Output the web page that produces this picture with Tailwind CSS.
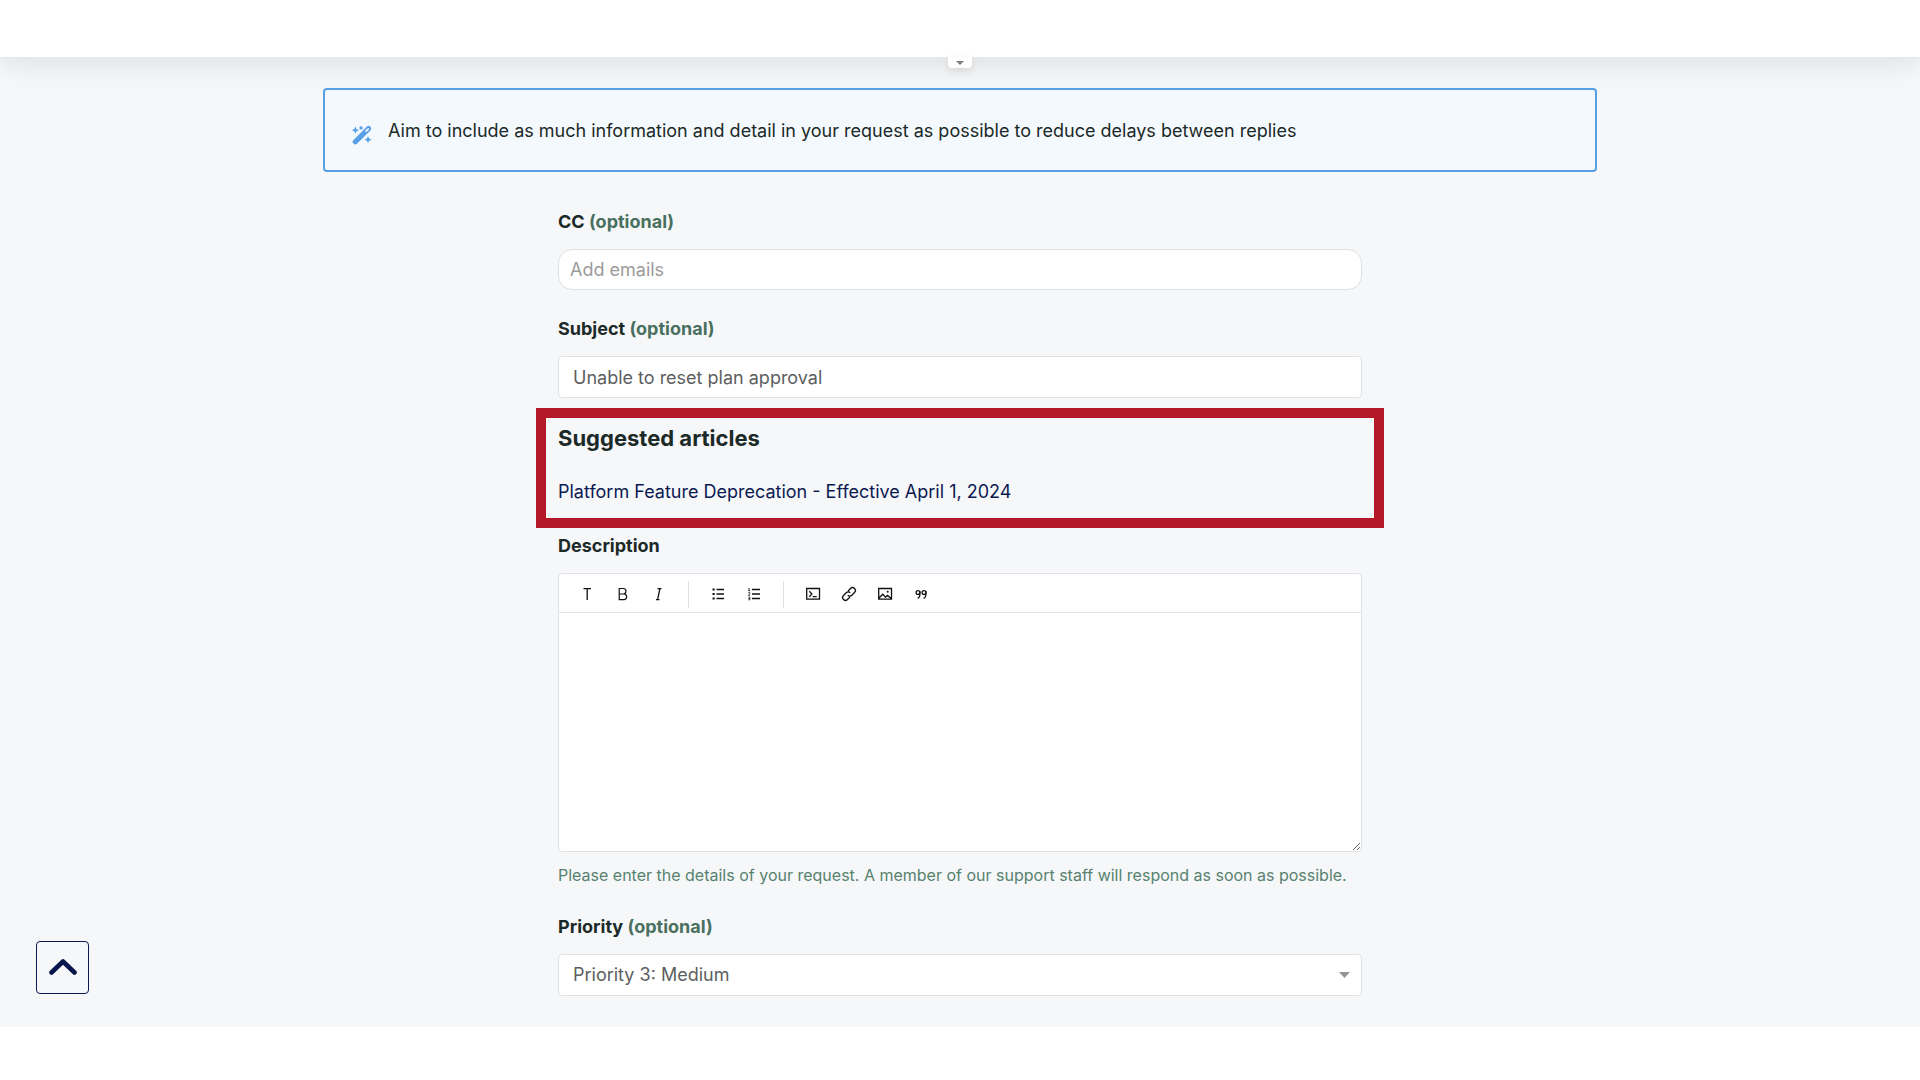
<!DOCTYPE html>
<html lang="en">
<head>
  <meta charset="UTF-8">
  <meta name="viewport" content="width=device-width, initial-scale=1.0">
  <title>Submit a request</title>
  <script src="https://cdn.jsdelivr.net/npm/@tailwindcss/browser@4"></script>
</head>
<body class="min-h-screen bg-white font-['Inter',sans-serif] text-lg/6 text-[#1b2a27]">
  <header class="relative z-10 h-[58px] border-b border-[#e6e7e9] bg-white shadow-[0_4px_30px_rgba(0,0,0,0.11)]">
    <button type="button" aria-label="Expand menu" class="absolute top-full left-1/2 flex h-[11px] w-6 -translate-x-1/2 items-center justify-center rounded-b bg-white shadow-[0_3px_8px_rgba(0,0,0,0.1)]">
      <svg class="h-1 w-2" viewBox="0 0 8 4" fill="#7b808b"><path d="M0 0h8L4 4z"/></svg>
    </button>
  </header>

  <main class="bg-[#f6f7f9] pt-[30px] pb-[31px]">
    <div class="mx-auto flex h-[84px] max-w-[1274px] items-center rounded border-2 border-[#57a0e8] bg-[#f4f9fe] px-[27px] pt-[2px]">
      <svg class="mt-2 mr-4 size-5 shrink-0" viewBox="0 0 20 20" fill="#57a0e8">
        <path fill-rule="evenodd" d="M1.500 14.900 14.700 1.700a2.600 2.600 0 0 1 3.700 3.700L5.200 18.600a2.600 2.600 0 0 1-3.700-3.700zM12.900 6.100l1.200 1.200 2.800-2.900a.8.8 0 0 0-1.200-1.200z"/>
        <path d="m3.400 1.600 1.100 2.500L7 5.200 4.500 6.300 3.400 8.800 2.300 6.300-.2 5.200l2.500-1.100zM16 11.100l1.100 2.500 2.500 1.100-2.500 1.100L16 18.300l-1.100-2.500-2.500-1.100 2.500-1.100z"/>
        <circle cx="9" cy="2.900" r="1.700"/>
      </svg>
      <p>Aim to include as much information and detail in your request as possible to reduce delays between replies</p>
    </div>

    <form class="mx-auto max-w-[804px] pt-[38px]">
      <label for="cc" class="block font-bold">CC <span class="text-[#49705f]">(optional)</span></label>
      <input id="cc" type="text" placeholder="Add emails" class="mt-[15px] block h-[41px] w-full rounded-[14px] border border-[#dfe1e4] bg-white px-[11px] placeholder:text-[#9b9b9b]">

      <label for="subject" class="mt-[27px] block font-bold">Subject <span class="text-[#49705f]">(optional)</span></label>
      <input id="subject" type="text" value="Unable to reset plan approval" class="mt-[15px] block h-[42px] w-full rounded border border-[#dfe1e4] bg-white px-[14px] text-[#5c5e60]">

      <section class="-mx-[22px] mt-[10px] h-[120px] border-10 border-[#b31728] px-3 pt-2">
        <h2 class="text-[22px]/6 font-bold">Suggested articles</h2>
        <a href="#" class="mt-[30px] block text-[#0c1a52]">Platform Feature Deprecation - Effective April 1, 2024</a>
      </section>

      <label for="description" class="mt-[6px] block font-bold">Description</label>
      <div class="mt-[15px] rounded border border-[#dfe1e4] bg-white">
        <div class="flex h-[39px] items-center border-b border-[#e4e5e7] pl-[10px] pt-[2px] text-[#111]">
          <button type="button" aria-label="Paragraph style" class="flex w-9 justify-center">
            <svg class="size-4" viewBox="0 0 16 16" fill="none" stroke="currentColor" stroke-width="1.3"><path d="M4.500 2.700h7.500M8.200 2.700V14"/></svg>
          </button>
          <button type="button" aria-label="Bold" class="flex w-9 justify-center">
            <svg class="size-4" viewBox="0 0 16 16" fill="none" stroke="currentColor" stroke-width="1.2"><path d="M4.200 2.500h4a2.700 2.700 0 0 1 0 5.500h-4zM4.200 8h4.600a2.800 2.800 0 0 1 0 5.700H4.200z"/></svg>
          </button>
          <button type="button" aria-label="Italic" class="flex w-9 justify-center">
            <svg class="size-4" viewBox="0 0 16 16" fill="none" stroke="currentColor" stroke-width="1.3"><path d="M6.500 2.600h4M5 13.600h3.500M8.900 2.600 6.600 13.600"/></svg>
          </button>
          <span class="mx-[11px] h-[27px] w-px bg-[#dfe1e4]"></span>
          <button type="button" aria-label="Bulleted list" class="flex w-9 justify-center">
            <svg class="size-4" viewBox="0 0 16 16" fill="none" stroke="currentColor" stroke-width="1.3"><path d="M6.500 3.500h7.500M6.500 8h7.500M6.500 12.500h7.500"/><path stroke-width="2.200" d="M2.500 3.500h2.200M2.500 8h2.200M2.500 12.500h2.200"/></svg>
          </button>
          <button type="button" aria-label="Numbered list" class="flex w-9 justify-center">
            <svg class="size-4" viewBox="0 0 16 16" fill="none" stroke="currentColor" stroke-width="1.3"><path d="M6 3.500h8M6 8h8M6 12.500h8"/><path stroke-width=".8" d="M2.300 2.500h.9v2.200M2.200 4.700h2M2.300 6.700h1.600v1L2.400 9.400H4M2.300 11.200h1.600v2.600H2.300M2.600 12.500h1.300"/></svg>
          </button>
          <span class="mx-[11px] h-[27px] w-px bg-[#dfe1e4]"></span>
          <button type="button" aria-label="Code block" class="flex w-9 justify-center">
            <svg class="size-4" viewBox="0 0 16 16" fill="none" stroke="currentColor" stroke-width="1.3"><path d="M1.700 2.500h12.800v10.700H1.700zM4.300 5.300 6.900 8l-2.600 2.700M7.700 10.600h4"/></svg>
          </button>
          <button type="button" aria-label="Link" class="flex w-9 justify-center">
            <svg class="size-4" viewBox="0 0 16 16" fill="none" stroke="currentColor" stroke-width="1.300"><path d="m7 5 2.500-2.500a2.800 2.800 0 0 1 4 4l-2.700 2.700a2.800 2.800 0 0 1-4 0M9 11l-2.500 2.500a2.800 2.800 0 0 1-4-4l2.700-2.700a2.800 2.800 0 0 1 4 0"/></svg>
          </button>
          <button type="button" aria-label="Image" class="flex w-9 justify-center">
            <svg class="size-4" viewBox="0 0 16 16" fill="none" stroke="currentColor" stroke-width="1.3"><path d="M1.700 2.500h12.800v10.700H1.700zM2 12l3.800-3.700 2.700 2.900 2-1.800 3.700 3"/><circle cx="10.700" cy="5.800" r="1" fill="currentColor" stroke="none"/></svg>
          </button>
          <button type="button" aria-label="Quote" class="flex w-9 justify-center">
            <svg class="size-4" viewBox="0 0 16 16" fill="none" stroke="currentColor" stroke-width="1.3"><circle cx="5" cy="6.500" r="1.900"/><path d="M6.900 5v3.500c0 2-.8 3.200-2.300 3.800"/><circle cx="11" cy="6.500" r="1.900"/><path d="M12.900 5v3.500c0 2-.8 3.200-2.300 3.800"/></svg>
          </button>
        </div>
        <textarea id="description" class="block h-[238px] w-full resize-y rounded-b p-3 outline-none"></textarea>
      </div>
      <p class="mt-[11px] text-base/6 text-[#56826f]">Please enter the details of your request. A member of our support staff will respond as soon as possible.</p>

      <label for="priority" class="mt-7 block font-bold">Priority <span class="text-[#49705f]">(optional)</span></label>
      <div class="relative mt-[15px]">
        <select id="priority" class="block h-[42px] w-full appearance-none rounded border border-[#dfe1e4] bg-white px-[14px] text-[#5c5e60]">
          <option>Priority 3: Medium</option>
        </select>
        <svg class="pointer-events-none absolute top-[18px] right-3 h-[6px] w-[11px]" viewBox="0 0 11 6" fill="#949494"><path d="M0 0h11L5.500 6z"/></svg>
      </div>
    </form>
  </main>

  <button type="button" aria-label="Back to top" class="fixed bottom-[86px] left-9 flex size-[53px] items-center justify-center rounded border border-[#0c1a52] pb-[2px]">
    <svg class="h-4 w-7" viewBox="0 0 28 16" fill="none" stroke="#07164b" stroke-width="4.600" stroke-linecap="round" stroke-linejoin="round"><path d="M2.500 13.500 14 2.500l11.500 11"/></svg>
  </button>
</body>
</html>
